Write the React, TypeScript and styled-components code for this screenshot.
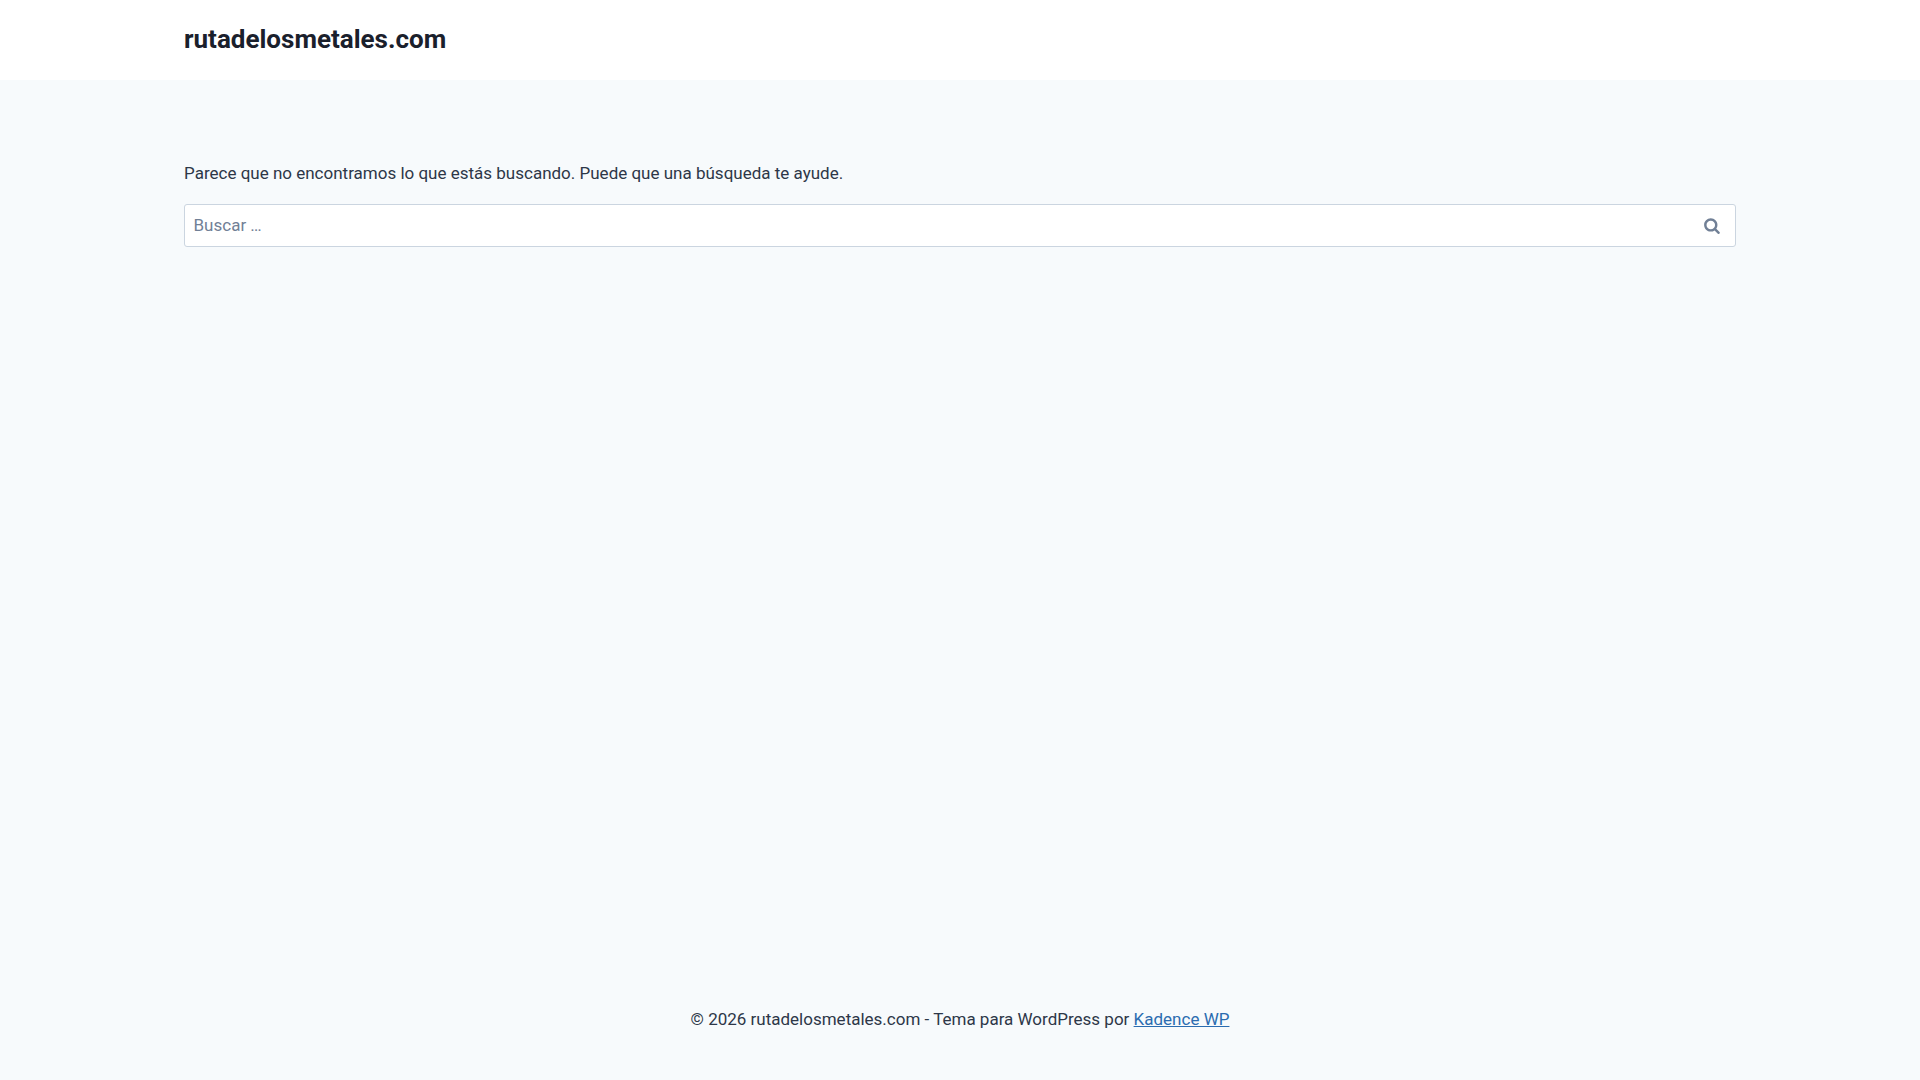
import styled, { createGlobalStyle } from "styled-components";

const GlobalStyle = createGlobalStyle`
  * { box-sizing: border-box; }
  html, body { margin: 0; padding: 0; }
  body {
    background: #f7fafc;
    color: #2d3748;
    font-family: Roboto, "Liberation Sans", sans-serif;
    font-size: 17px;
    line-height: 1.6;
  }
`;

const Page = styled.div`
  min-height: 100vh;
  display: flex;
  flex-direction: column;
`;

const Header = styled.header`
  height: 80px;
  background: #fff;
  display: flex;
  align-items: center;
  padding: 0 184px;
`;

const SiteTitle = styled.div`
  font-size: 26px;
  font-weight: 700;
  line-height: 1.2;
  color: #1a202c;
`;

const Main = styled.main`
  flex: 1;
  padding: 80px 184px 0;
`;

const Message = styled.p`
  margin: 0 0 17px;
`;

const SearchForm = styled.form`
  position: relative;
`;

const SearchField = styled.input`
  display: block;
  width: 100%;
  padding: 0.4em 60px 0.4em 0.5em;
  background: #fff;
  border: 1px solid #cbd5e0;
  border-radius: 3px;
  outline: none;
  color: #2d3748;
  font: inherit;

  &::placeholder {
    color: #718096;
    opacity: 1;
  }
`;

const SearchIcon = styled.svg`
  position: absolute;
  right: 16px;
  top: 13px;
  width: 16px;
  height: 17px;
  fill: #718096;
`;

const Footer = styled.footer`
  padding: 30px 184px 47px;
  text-align: center;
  font-size: 17px;
`;

const FooterLink = styled.a`
  color: #2b6cb0;
  text-decoration: underline;
`;

export default function App() {
  return (
    <>
      <GlobalStyle />
      <Page>
        <Header>
          <SiteTitle>rutadelosmetales.com</SiteTitle>
        </Header>
        <Main>
          <Message>
            Parece que no encontramos lo que estás buscando. Puede que una búsqueda te ayude.
          </Message>
          <SearchForm onSubmit={(e) => e.preventDefault()}>
            <SearchField type="search" placeholder="Buscar …" />
            <SearchIcon viewBox="0 0 26 28" aria-hidden="true">
              <path d="M18 13c0-3.859-3.141-7-7-7s-7 3.141-7 7 3.141 7 7 7 7-3.141 7-7zM26 26c0 1.094-0.906 2-2 2-0.531 0-1.047-0.219-1.406-0.594l-5.359-5.344c-1.828 1.266-4.016 1.937-6.234 1.937-6.078 0-11-4.922-11-11s4.922-11 11-11 11 4.922 11 11c0 2.219-0.672 4.406-1.937 6.234l5.359 5.359c0.359 0.359 0.578 0.875 0.578 1.406z" />
            </SearchIcon>
          </SearchForm>
        </Main>
        <Footer>
          © 2026 rutadelosmetales.com - Tema para WordPress por <FooterLink href="#">Kadence WP</FooterLink>
        </Footer>
      </Page>
    </>
  );
}
